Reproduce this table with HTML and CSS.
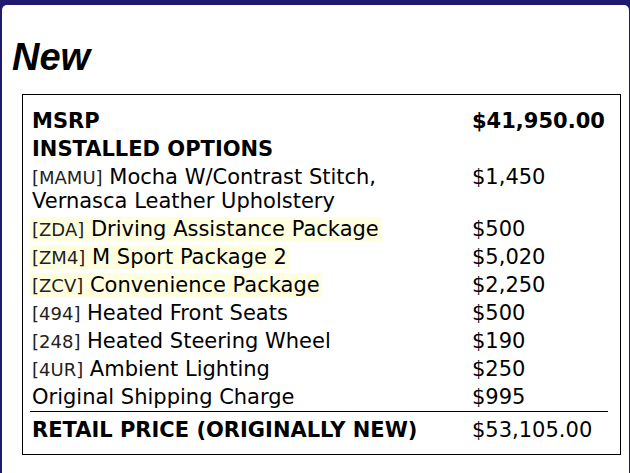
FILE: index.html
```html
<!DOCTYPE html>
<html>
<head>
<meta charset="utf-8">
<link rel="stylesheet" href="styles.css">
</head>
<body>
<div class="card">
  <h1 class="title">New</h1>
  <div class="box">
    <table class="sticker">
      <tr class="head"><td class="desc">MSRP</td><td class="price">$41,950.00</td></tr>
      <tr class="head"><td class="desc">INSTALLED OPTIONS</td><td class="price"></td></tr>
      <tr><td class="desc"><span class="code">[MAMU]</span> Mocha W/Contrast Stitch, Vernasca Leather Upholstery</td><td class="price">$1,450</td></tr>
      <tr><td class="desc"><span class="hl"><span class="code">[ZDA]</span> Driving Assistance Package</span></td><td class="price">$500</td></tr>
      <tr><td class="desc"><span class="hl"><span class="code">[ZM4]</span> M Sport Package 2</span></td><td class="price">$5,020</td></tr>
      <tr><td class="desc"><span class="hl"><span class="code">[ZCV]</span> Convenience Package</span></td><td class="price">$2,250</td></tr>
      <tr><td class="desc"><span class="code">[494]</span> Heated Front Seats</td><td class="price">$500</td></tr>
      <tr><td class="desc"><span class="code">[248]</span> Heated Steering Wheel</td><td class="price">$190</td></tr>
      <tr><td class="desc"><span class="code">[4UR]</span> Ambient Lighting</td><td class="price">$250</td></tr>
      <tr><td class="desc">Original Shipping Charge</td><td class="price">$995</td></tr>
      <tr class="total"><td class="desc">RETAIL PRICE (ORIGINALLY NEW)</td><td class="price">$53,105.00</td></tr>
    </table>
  </div>
</div>
</body>
</html>
```

FILE: styles.css
```css
html, body {
  margin: 0;
  padding: 0;
  background: #1f1a6e;
  height: 100%;
  overflow: hidden;
}

.card {
  margin: 5px 1px 0 2px;
  background: #ffffff;
  border-radius: 5px 5px 0 0;
  height: 480px;
  padding-top: 29px;
  box-sizing: border-box;
}

.title {
  margin: 0 0 14px 0;
  padding-left: 10px;
  font-family: "Liberation Sans", Arial, sans-serif;
  font-weight: bold;
  font-style: italic;
  font-size: 38px;
  line-height: 46px;
  color: #000;
}

.box {
  margin-left: 20px;
  width: 599px;
  height: 361px;
  box-sizing: border-box;
  border: 1px solid #000;
  padding: 12px 12px 0 7px;
}

.sticker {
  width: 100%;
  border-collapse: collapse;
  font-family: "DejaVu Sans", Verdana, sans-serif;
  font-size: 21px;
  line-height: 24px;
  color: #000;
}

.sticker td {
  padding: 2px 2px;
  height: 24px;
  vertical-align: top;
}

.sticker .desc {
  width: 436px;
}

.head td {
  font-weight: bold;
}

.code {
  font-size: 18px;
  line-height: 1;
  color: #222;
}

.hl {
  background: #ffffe0;
  padding: 0 2px;
  margin-left: -2px;
}

.total td {
  border-top: 1px solid #000;
  padding-top: 6px;
}

.total .desc {
  font-weight: bold;
}
```
